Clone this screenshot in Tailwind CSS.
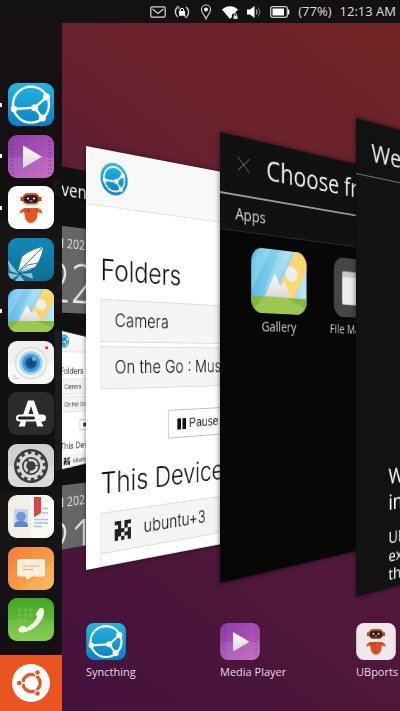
<!DOCTYPE html>
<html lang="en">
<head>
<meta charset="utf-8">
<meta name="viewport" content="width=device-width, initial-scale=1">
<title>App spread</title>
<script src="https://cdn.jsdelivr.net/npm/@tailwindcss/browser@4"></script>
</head>
<body class="bg-[#43123c] font-['Open_Sans','Noto_Sans',sans-serif] text-white">
<svg class="absolute h-0 w-0" aria-hidden="true">
  <defs>
    <linearGradient id="gSync" x1="0" y1="0" x2="0" y2="1"><stop offset="0" stop-color="#26b6de"/><stop offset="1" stop-color="#0882c8"/></linearGradient>
    <linearGradient id="gMedia" x1="0" y1="0" x2="1" y2="1"><stop offset="0" stop-color="#8a3fa8"/><stop offset="1" stop-color="#c25fbc"/></linearGradient>
    <linearGradient id="gDekko" x1="0" y1="0" x2="0" y2="1"><stop offset="0" stop-color="#1089b9"/><stop offset="1" stop-color="#0f6f96"/></linearGradient>
    <linearGradient id="gSky" x1="0" y1="0" x2="1" y2="0"><stop offset="0" stop-color="#5cbde6"/><stop offset="1" stop-color="#bde6f3"/></linearGradient>
    <linearGradient id="gMsg" x1="0" y1="0" x2="1" y2="1"><stop offset="0" stop-color="#f47c3c"/><stop offset="1" stop-color="#f8b548"/></linearGradient>
    <linearGradient id="gPhone" x1="0" y1="0" x2="0" y2="1"><stop offset="0" stop-color="#43a722"/><stop offset="1" stop-color="#7dc944"/></linearGradient>
    <linearGradient id="gMount" x1="0" y1="0" x2="0" y2="1"><stop offset="0" stop-color="#ffffff"/><stop offset="1" stop-color="#d6d6d6"/></linearGradient>
    <radialGradient id="gLens"><stop offset="0" stop-color="#0c3f72"/><stop offset=".45" stop-color="#1c5f9c"/><stop offset=".5" stop-color="#3b8fcc"/><stop offset=".75" stop-color="#55a8dc"/><stop offset=".78" stop-color="#8fcbea"/><stop offset="1" stop-color="#b6def0"/></radialGradient>
    <clipPath id="tile"><rect width="46" height="43" rx="9"/></clipPath>

    <symbol id="net" viewBox="0 0 46 43">
      <g fill="none" stroke="#fff" stroke-width="2.4"><circle cx="23" cy="21.6" r="18"/><path d="M6 26 26.7 24.7 38.7 14M26.7 24.7 34.3 35"/></g>
      <g fill="#fff"><circle cx="6" cy="26" r="3.3"/><circle cx="26.7" cy="24.7" r="3.5"/><circle cx="38.4" cy="14" r="3.6"/><circle cx="34.3" cy="35" r="3.6"/></g>
    </symbol>
    <symbol id="syncthing" viewBox="0 0 46 43"><rect width="46" height="43" rx="9" fill="url(#gSync)"/><use href="#net" width="46" height="43"/></symbol>
    <symbol id="media" viewBox="0 0 46 43">
      <rect width="46" height="43" rx="9" fill="url(#gMedia)"/>
      <g clip-path="url(#tile)"><path d="M0 22h46v21H0z" fill="#fff" opacity=".1"/><path d="M4 5v34M42 5v34" stroke="#6a2a8c" stroke-width="4" stroke-dasharray="2 2" opacity=".25"/></g>
      <path d="M15 10.500v22.500L34 21.700z" fill="url(#gMount)"/>
    </symbol>
    <symbol id="robot" viewBox="0 0 46 43">
      <rect width="46" height="43" rx="9" fill="#fff"/>
      <rect x="14.500" y="7" width="17" height="11.500" rx="5" fill="#e95420"/><path d="M12.500 11h21v4h-21z" fill="#c9401a"/><rect x="16" y="9" width="14" height="8" rx="4" fill="#222"/>
      <circle cx="20" cy="12.500" r="1.100" fill="#fff"/><circle cx="26" cy="12.500" r="1.100" fill="#fff"/><path d="M21.500 15h3" stroke="#fff" stroke-width=".8"/>
      <path d="M17 22h12c3 .5 5 2.500 5.500 5.500l-5-1.500c.5 5-2 11-6.500 11s-7-6-6.500-11l-5 1.500c.5-3 2.500-5 5.500-5.500z" fill="#e95420"/>
      <path d="M17 22v5M29 22v5" stroke="#b83a14" stroke-width=".7"/><circle cx="20.500" cy="24.500" r="1.200" fill="#365a63"/>
    </symbol>
    <symbol id="dekko" viewBox="0 0 46 43">
      <rect width="46" height="43" rx="9" fill="url(#gDekko)"/>
      <path d="M10 34 14 19Q23 11 35 9 34 19 27 29z" fill="#fff"/><path d="M10 34 35 9M10 34l10-7 10-2" stroke="#1d7ba5" stroke-width=".9" fill="none"/>
      <g clip-path="url(#tile)" fill="#9fd0e4" opacity=".85"><path d="M-1 21 6 30 11 36 2 33z"/><path d="M0 35 11 37 0 43zM12 37 6 44H17zM13 36 24 35 25 41zM13 35 19 29 24 31z"/></g>
    </symbol>
    <symbol id="gallery" viewBox="0 0 46 43">
      <g clip-path="url(#tile)">
        <path d="M0 0h46v43H0z" fill="url(#gSky)"/>
        <path d="M6 0 0 12v17L16 0zM24 0 10 28h8L33 0z" fill="#fff" opacity=".18"/>
        <path d="M36 0h10v11L34 33H18z" fill="#fcd770"/>
        <path d="M10 33 19 16 24 25 27 21 33 33z" fill="url(#gMount)"/>
        <path d="M0 32h46v11H0z" fill="#86b93a"/><path d="M0 43 10 32h18l18 7v4z" fill="#a5cc5c" opacity=".7"/>
        <circle cx="33" cy="15.500" r="5.200" fill="#efeeea"/>
      </g>
    </symbol>
    <symbol id="camera" viewBox="0 0 46 43">
      <rect width="46" height="43" rx="9" fill="#f2f0ec"/><path d="M0 22h46v12a9 9 0 0 1-9 9H9a9 9 0 0 1-9-9z" fill="#fff" opacity=".5"/>
      <circle cx="23" cy="22" r="16.500" fill="#e2e0da"/><circle cx="23" cy="22" r="14.500" fill="#f1f5f5"/><circle cx="23" cy="22" r="12" fill="url(#gLens)"/><circle cx="26" cy="18" r="2" fill="#9bd3ee" opacity=".7"/>
      <circle cx="38.700" cy="6.700" r="1.500" fill="#e32020"/><path d="M5 35h3M5 37.500h6" stroke="#ccc8bd" stroke-width="1"/>
    </symbol>
    <symbol id="store" viewBox="0 0 46 43">
      <rect width="46" height="43" rx="9" fill="#2b2b2b"/>
      <path d="M10.500 34.500 13 29h5l-1 5.500zM35.500 34.500 33 29h-5l1 5.500z" fill="#fff"/>
      <path d="M15 23 20 8.500h6L31 23z" fill="#fff"/><path d="M20.500 22 23 14l2.500 8z" fill="#2b2b2b"/>
      <rect x="8" y="22.500" width="30" height="7" rx="3.500" fill="#fff"/><rect x="10" y="24.500" width="17" height="3" rx="1.500" fill="#222"/>
    </symbol>
    <symbol id="settings" viewBox="0 0 46 43">
      <rect width="46" height="43" rx="9" fill="#dadada"/><path d="M0 22h46V9a9 9 0 0 0-9-9H9a9 9 0 0 0-9 9z" fill="#c9c9c9" opacity=".6"/>
      <circle cx="23" cy="22" r="17" fill="#3d3d3d"/>
      <circle cx="23" cy="22" r="13" fill="none" stroke="#d8d8d8" stroke-width="3" stroke-dasharray="3.400 3.407"/>
      <circle cx="23" cy="22" r="10.500" fill="none" stroke="#d8d8d8" stroke-width="3"/>
      <circle cx="23" cy="22" r="6" fill="none" stroke="#d8d8d8" stroke-width="2.600" stroke-dasharray="10.500 2.066"/>
    </symbol>
    <symbol id="contacts" viewBox="0 0 46 43">
      <rect width="46" height="43" rx="9" fill="#f1efe6"/><path d="M23 0h14a9 9 0 0 1 9 9v25a9 9 0 0 1-9 9H23z" fill="#faf9f4"/>
      <rect x="6" y="14" width="14" height="18" fill="#c5d4ec"/><circle cx="13" cy="21.500" r="4.800" fill="#6f97dc"/><path d="M6 32c0-5 3-6 7-6s7 1 7 6z" fill="#5c87d3"/>
      <path d="M26 2h7v16l-7 4z" fill="#e2423d"/><path d="M34 13.500h6M34 18h6M26 24.500h14M26 28h14M26 31.500h8" stroke="#a9bfe6" stroke-width="1.300"/>
    </symbol>
    <symbol id="messages" viewBox="0 0 46 43">
      <rect width="46" height="43" rx="9" fill="url(#gMsg)"/><path d="M46 14v20a9 9 0 0 1-9 9H12z" fill="#fff" opacity=".1"/>
      <path d="M11 12h24a2 2 0 0 1 2 2v13.500a2 2 0 0 1-2 2H24L19 33l-2-3.500h-6a2 2 0 0 1-2-2V14a2 2 0 0 1 2-2z" fill="#faeede"/>
      <path d="M15 19h16M15 22.500h10" stroke="#f0a96a" stroke-width="1.100"/>
    </symbol>
    <symbol id="phone" viewBox="0 0 46 43">
      <rect width="46" height="43" rx="9" fill="url(#gPhone)"/><path d="M0 22h46v12a9 9 0 0 1-9 9H9a9 9 0 0 1-9-9z" fill="#fff" opacity=".08"/>
      <path d="M10 12h3.500M15.500 12H19M21 12h3.500M10 17h3.500M15.500 17H19M21 17h3.500M10 22h3.500M15.500 22H19" stroke="#7fcb5e" stroke-width="3.500" opacity=".45"/>
      <path d="M30.500 11.500c1.500-2 5-2 5.500.5C37 21 27 33.500 14 34.500c-3.500 0-4.500-2.500-3-4.500l2.500-1.800c1.800-.8 3.500-.3 4.500 1.500 5-2 9.500-6.500 11-11-1.200-1.500-1.300-3-.5-4.200z" fill="#f4f8ea"/>
    </symbol>
    <symbol id="files" viewBox="0 0 46 43"><rect width="46" height="43" rx="9" fill="#464646"/><rect x="8" y="10" width="30" height="24" rx="1.500" fill="#eee"/><path d="M8 10h30v4H8z" fill="#c9c9c9"/></symbol>
    <symbol id="identicon" viewBox="0 0 5 5"><path d="M0 0h2v1H0zM3 0h2v1H3zM1 1h1v1H1zM3 1h1v1H3zM0 2h2v1H0zM2 2h1v1H2zM4 2h1v1H4zM0 3h2v1H0zM3 3h2v1H3zM0 4h1v1H0zM2 4h1v1H2zM4 4h1v1H4z" fill="#222"/></symbol>
  </defs>
</svg>

<div class="relative flex min-h-screen flex-col overflow-hidden bg-[linear-gradient(38deg,#41113c_0%,#54193a_45%,#69212d_72%,#722524_100%)]">
  <header class="z-20 flex h-[23px] items-center justify-end bg-[#121212] pr-1 text-[13px] leading-none text-[#dedede]">
    <div class="flex items-center gap-2">
      <svg class="h-4 w-4" viewBox="0 0 16 16" fill="none" stroke="#d8d8d8" stroke-width="1.200" aria-label="Mail"><rect x=".8" y="2.800" width="14.400" height="10.400" rx="1.500"/><path d="M2.500 5 8 9.500 13.500 5"/></svg>
      <svg class="h-4 w-4" viewBox="0 0 16 16" aria-label="Rotation lock"><path d="M4 13A6.500 6.500 0 0 1 3 3.500M12 3a6.500 6.500 0 0 1 1 9.500" fill="none" stroke="#d8d8d8" stroke-width="1.300"/><path d="M2.500 2.800h2.500v2.500M13.500 13.200H11v-2.500" fill="none" stroke="#d8d8d8"/><path d="M5 7h6v4.700H5z" fill="#fff"/><path d="M6.300 7.500V6a1.700 1.700 0 0 1 3.400 0v1.500" fill="none" stroke="#fff"/></svg>
      <svg class="mx-[2px] h-4 w-3" viewBox="0 0 12 16" aria-label="Location"><path d="M6 15C5 11.500 1.500 9 1.500 5.500a4.500 4.500 0 0 1 9 0C10.500 9 7 11.500 6 15z" fill="none" stroke="#c8c8c8" stroke-width="1.200"/><circle cx="6" cy="5.500" r="2" fill="#fff"/></svg>
      <svg class="h-4 w-4" viewBox="0 0 16 16" aria-label="Wi-Fi"><path d="M0 5.500C4.500 1 11.500 1 16 5.500L12.500 9.500c-2.500-.5-3 2-2.500 3.500L8 15z" fill="#fff"/><path d="M11.500 11.500h4V15h-4z" fill="#ddd"/><path d="M12.500 11.500v-1a1 1 0 0 1 2 0v1" fill="none" stroke="#ddd"/></svg>
      <svg class="h-4 w-4" viewBox="0 0 16 16" aria-label="Volume"><path d="M1 5.500h3L8.500 2v12L4 10.500H1z" fill="#fff"/><path d="M10.300 5.500q1.800 2.500 0 5" fill="none" stroke="#ccc"/><path d="M12.300 3.500q3 4.500 0 9" fill="none" stroke="#777"/></svg>
      <svg class="h-4 w-5" viewBox="0 0 20 16" aria-label="Battery"><rect x=".7" y="2.700" width="16.600" height="10.600" rx="2" fill="none" stroke="#ccc" stroke-width="1.300"/><path d="M2.500 4.500h11.500v7H2.500zM18 5.500h1.300v5H18z" fill="#fff"/></svg>
      <span>(77%)</span>
      <time>12:13 AM</time>
    </div>
  </header>

  <div class="z-10 flex flex-1">
    <aside class="flex w-[62px] flex-col bg-[#121011]/95" aria-label="Launcher">
      <nav class="flex flex-1 flex-col justify-between pt-[60px] pb-[14px]">
        <button class="flex items-center gap-[6px]" aria-label="Syncthing"><i class="h-1 w-[2px] bg-white"></i><svg class="h-[43px] w-[46px]"><use href="#syncthing"/></svg></button>
        <button class="flex items-center gap-[6px]" aria-label="Media Player"><i class="h-1 w-[2px] bg-white"></i><svg class="h-[43px] w-[46px]"><use href="#media"/></svg></button>
        <button class="flex items-center gap-[6px]" aria-label="UBports"><i class="h-1 w-[2px] bg-white"></i><svg class="h-[43px] w-[46px]"><use href="#robot"/></svg></button>
        <button class="pl-2" aria-label="Dekko"><svg class="h-[43px] w-[46px]"><use href="#dekko"/></svg></button>
        <button class="flex items-center gap-[6px]" aria-label="Gallery"><i class="h-1 w-[2px] bg-white"></i><svg class="h-[43px] w-[46px]"><use href="#gallery"/></svg></button>
        <button class="pl-2" aria-label="Camera"><svg class="h-[43px] w-[46px]"><use href="#camera"/></svg></button>
        <button class="pl-2" aria-label="OpenStore"><svg class="h-[43px] w-[46px]"><use href="#store"/></svg></button>
        <button class="pl-2" aria-label="System Settings"><svg class="h-[43px] w-[46px]"><use href="#settings"/></svg></button>
        <button class="pl-2" aria-label="Contacts"><svg class="h-[43px] w-[46px]"><use href="#contacts"/></svg></button>
        <button class="pl-2" aria-label="Messaging"><svg class="h-[43px] w-[46px]"><use href="#messages"/></svg></button>
        <button class="pl-2" aria-label="Phone"><svg class="h-[43px] w-[46px]"><use href="#phone"/></svg></button>
      </nav>
      <button class="flex h-14 items-center justify-center bg-[#e95420]" aria-label="Home">
        <svg class="h-[38px] w-[38px]" viewBox="0 0 38 38"><circle cx="19" cy="19" r="19" fill="#fff"/><circle cx="19.500" cy="19" r="8.700" fill="none" stroke="#e95420" stroke-width="3.200"/>
          <path d="M19.500 19H5M19.500 19 27 6M19.500 19 27 32" stroke="#fff" stroke-width="1.400"/><circle cx="19.500" cy="19" r="6" fill="#fff"/>
          <g fill="#e95420" stroke="#fff" stroke-width="1.200"><circle cx="7.300" cy="19" r="2.900"/><circle cx="25.500" cy="8.500" r="2.900"/><circle cx="25.500" cy="29.500" r="2.900"/></g></svg>
      </button>
    </aside>
  </div>

  <!-- Windows of the spread, each turned about its left edge -->
  <main>
    <section class="absolute top-[155px] left-0 flex h-[406px] w-[237px] origin-left flex-col bg-[#111] [transform:perspective(641px)_rotateY(30deg)]" aria-label="Gallery window">
      <h2 class="h-[63px] pt-[10px] pl-[64px] text-[20px] leading-7">Events</h2>
      <div class="h-[92px] bg-[#666] pl-[54px] text-[#e8e8e8]">
        <p class="pt-[10px] text-[14px] leading-4">JUN 2021</p>
        <p class="text-[58px] leading-[66px] font-light">22</p>
      </div>
      <div class="mt-[18px] ml-[67px] flex h-[149px] flex-col bg-white font-[Inter,sans-serif] text-[#333] [clip-path:polygon(0_0,100%_20%,100%_86%,0_100%)]">
        <div class="h-6 border-b border-[#ddd] bg-[#f7f7f7] pt-[5px] pl-[5px]"><svg class="h-[14px] w-[13px] rounded-full bg-[#1594cf]"><use href="#net"/></svg></div>
        <p class="pt-3 pl-[6px] text-[9px] leading-4">Folders</p>
        <p class="ml-[6px] border border-[#e4e4e4] bg-[#f5f5f5] pl-[5px] text-[6px] leading-[15px]">Camera</p>
        <p class="mt-[2px] ml-[6px] border border-[#e4e4e4] bg-[#f5f5f5] pl-[5px] text-[6px] leading-[15px]">On the Go</p>
        <div class="mt-2 ml-[32px] h-3 border border-[#ccc] pt-[3px] pl-1"><i class="block h-1 w-1 bg-[#333]"></i></div>
        <p class="pt-2 pl-[6px] text-[9px] leading-4">This Device</p>
        <p class="ml-[6px] flex items-center gap-1 bg-[#f5f5f5] pl-[5px] text-[6px] leading-[15px]"><svg class="h-2 w-2"><use href="#identicon"/></svg>ubuntu+3</p>
      </div>
      <div class="mt-[16px] flex-1 overflow-hidden bg-[#666] pl-[54px] text-[#e8e8e8]">
        <p class="pt-[10px] text-[14px] leading-4">JUN 2021</p>
        <p class="text-[58px] leading-[66px] font-light">21</p>
      </div>
    </section>

    <section class="absolute top-[146px] left-[86px] flex h-[424px] w-[247px] origin-left flex-col overflow-hidden bg-white font-[Inter,sans-serif] text-[#111] shadow-[0_0_6px_rgba(0,0,0,.5)] [transform:perspective(641px)_rotateY(30deg)]" aria-label="Syncthing window">
      <div class="h-[58px] shrink-0 border-b border-[#e2e2e2] bg-[#f8f8f8] pt-3 pl-[17px]">
        <svg class="h-[33px] w-[33px]" viewBox="0 0 33 33"><circle cx="16.500" cy="16.500" r="16.500" fill="url(#gSync)"/><g fill="none" stroke="#fff" stroke-width="1.800"><circle cx="16.500" cy="16.500" r="12.500"/><path d="M4.500 19 19 18.500 27 11M19 18.500 24 26"/></g><g fill="#fff"><circle cx="4.800" cy="19" r="2.300"/><circle cx="19" cy="18.500" r="2.500"/><circle cx="27" cy="11.500" r="2.500"/><circle cx="24.500" cy="26" r="2.500"/></g></svg>
      </div>
      <h2 class="mt-[46px] pl-[17px] text-[30px] leading-9 font-light">Folders</h2>
      <div class="mt-3 ml-[17px] flex flex-col gap-1 text-[19px] leading-[42px] font-light">
        <p class="border border-[#dcdcdc] bg-[#f5f5f5] pl-4">Camera</p>
        <p class="border border-[#dcdcdc] bg-[#f5f5f5] pl-4 whitespace-nowrap">On the Go : Music</p>
      </div>
      <button class="mt-6 ml-[102px] flex h-[31px] w-[100px] shrink-0 items-center gap-1 border border-[#bbb] pl-3 font-['Liberation_Sans',sans-serif] text-[15px] text-[#222]"><svg class="h-3 w-3" viewBox="0 0 12 12"><path d="M0 0h5v12H0zM7 0h5v12H7z" fill="#111"/></svg>Pause All</button>
      <h2 class="mt-[22px] pl-[17px] text-[30px] leading-9 font-light whitespace-nowrap">This Device</h2>
      <div class="mt-3 ml-[17px] flex-1 border border-[#dcdcdc]">
        <p class="flex h-[41px] items-center gap-4 border-b border-[#dcdcdc] bg-[#f5f5f5] pl-4 text-[19px] font-light">
          <svg class="h-5 w-5"><use href="#identicon"/></svg>ubuntu+3</p>
      </div>
    </section>

    <section class="absolute top-[132px] left-[220px] flex h-[451px] w-[262px] origin-left flex-col overflow-hidden bg-[#070707] shadow-[0_0_6px_rgba(0,0,0,.6)] [transform:perspective(553px)_rotateY(30deg)]" aria-label="Media Player window">
      <div class="flex h-[61px] items-center gap-5 border-b-2 border-[#999] bg-[#111] pb-1 pl-5">
        <svg class="h-4 w-4 shrink-0" viewBox="0 0 16 16" stroke="#777" aria-label="Close"><path d="M1 1l14 14M15 1 1 15"/></svg>
        <h2 class="text-[29px] leading-9 whitespace-nowrap text-[#eee]">Choose from</h2>
      </div>
      <h3 class="h-[36px] border-b border-[#2b2b2b] bg-[#111] pl-[18px] text-[16px] leading-9 text-[#ddd]">Apps</h3>
      <div class="flex gap-[14px] pt-[14px] pl-6 text-center text-[14px] leading-5 text-[#ccc]">
        <figure class="flex w-[98px] flex-col items-center gap-1"><svg class="h-[68px] w-[73px]"><use href="#gallery"/></svg><figcaption>Gallery</figcaption></figure>
        <figure class="flex w-[98px] flex-col items-center gap-1"><svg class="h-[68px] w-[73px]"><use href="#files"/></svg><figcaption class="whitespace-nowrap">File Manager</figcaption></figure>
      </div>
    </section>

    <section class="absolute top-[118px] left-[356px] flex h-[479px] w-[280px] origin-left flex-col overflow-hidden bg-[#121212] shadow-[0_0_6px_rgba(0,0,0,.6)] [transform:perspective(506px)_rotateY(30deg)]" aria-label="UBports window">
      <h2 class="h-[56px] border-b border-[#777] pt-3 pl-[18px] text-[25px] leading-9 text-[#eee]">Welcome</h2>
      <p class="mt-[294px] pl-[39px] text-[21px] leading-[27px]">Welcome<br>in</p>
      <p class="mt-[14px] pl-[39px] text-[16px] leading-[19px]">UBports<br>experience<br>the</p>
    </section>

    <div class="text-[11px] leading-4 text-[#e2dce0]">
      <button class="absolute top-[623px] left-[86px] flex flex-col gap-1 text-left"><svg class="h-[37px] w-[40px]"><use href="#syncthing"/></svg>Syncthing</button>
      <button class="absolute top-[623px] left-[220px] flex flex-col gap-1 text-left whitespace-nowrap"><svg class="h-[37px] w-[40px]"><use href="#media"/></svg>Media Player</button>
      <button class="absolute top-[623px] left-[356px] flex flex-col gap-1 text-left"><svg class="h-[37px] w-[40px] opacity-90"><use href="#robot"/></svg>UBports</button>
    </div>
  </main>
</div>
</body>
</html>
